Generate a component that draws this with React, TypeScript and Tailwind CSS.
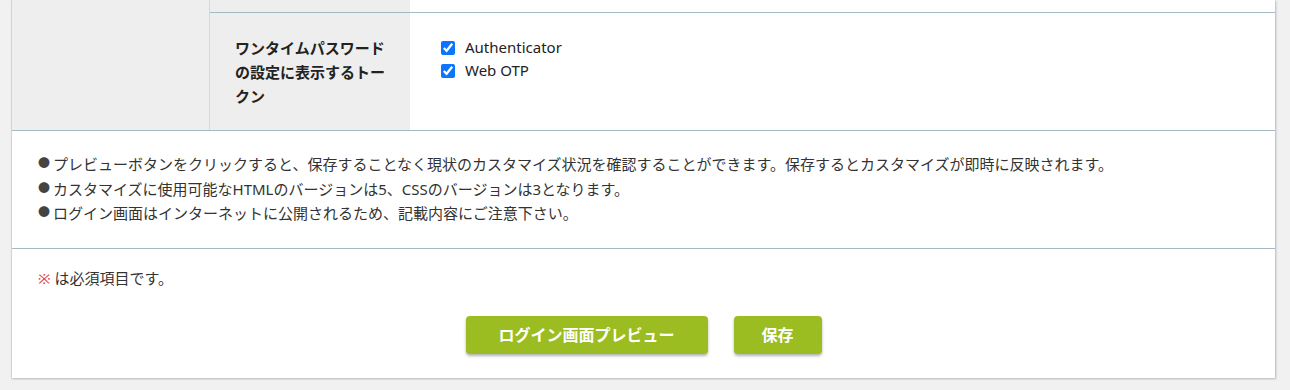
const jp = "font-['Noto_Sans','Noto_Sans_CJK_JP',sans-serif]";

function Check({ label }: { label: string }) {
  return (
    <label className="flex h-[23px] items-center gap-[10px] text-[15px] text-[#222]">
      <input type="checkbox" defaultChecked className="h-[14px] w-[14px] accent-[#0a75ff]" />
      <span>{label}</span>
    </label>
  );
}

export default function App() {
  const notes = [
    "プレビューボタンをクリックすると、保存することなく現状のカスタマイズ状況を確認することができます。保存するとカスタマイズが即時に反映されます。",
    "カスタマイズに使用可能なHTMLのバージョンは5、CSSのバージョンは3となります。",
    "ログイン画面はインターネットに公開されるため、記載内容にご注意下さい。",
  ];

  return (
    <div className={`h-[390px] overflow-hidden bg-[#f1f1f1] pl-[11px] ${jp}`}>
      <div className="w-[1264px] border-l border-[#d4d4d4] bg-white shadow-[1px_1px_2px_rgba(0,0,0,0.25)]">
        {/* settings table */}
        <div className="flex border-b border-[#a3b9c5]">
          <div className="w-[198px] shrink-0 border-r border-[#c9dbe3] bg-[#eeeeee]" />
          <div className="flex-1">
            <div className="flex h-[13px] border-b border-[#a3b9c5]">
              <div className="w-[200px] bg-[#eeeeee]" />
              <div className="flex-1" />
            </div>
            <div className="flex h-[117px]">
              <div className="flex w-[200px] items-center bg-[#eeeeee] pl-[25px] pr-[20px] text-[15px] font-bold leading-[24px] text-[#222]">
                ワンタイムパスワードの設定に表示するトークン
              </div>
              <div className="flex-1 pl-[31px] pt-[23px]">
                <Check label="Authenticator" />
                <Check label="Web OTP" />
              </div>
            </div>
          </div>
        </div>

        {/* notes */}
        <div className="border-b border-[#a3b9c5] px-[26px] pb-[22px] pt-[21px] text-[15px] leading-[24.5px] text-[#333]">
          {notes.map((n) => (
            <p key={n} className="flex h-[24.5px] items-center">
              <span className="w-[15px] shrink-0 text-[12px] leading-none text-[#444]">●</span>
              <span>{n}</span>
            </p>
          ))}
        </div>

        {/* actions */}
        <div className="pb-[24px] pt-[19px]">
          <p className="px-[26px] text-[15px] leading-[20px] text-[#333]">
            <span className="text-[#e03a3a]">※</span> は必須項目です。
          </p>
          <div className="mt-[28px] flex justify-center gap-[26px]">
            <button className="h-[38px] w-[242px] rounded-[4px] bg-[#9bbd21] text-[16px] font-bold text-white shadow-[0_2px_3px_rgba(0,0,0,0.3)]">
              ログイン画面プレビュー
            </button>
            <button className="h-[38px] w-[88px] rounded-[4px] bg-[#9bbd21] text-[16px] font-bold text-white shadow-[0_2px_3px_rgba(0,0,0,0.3)]">
              保存
            </button>
          </div>
        </div>
      </div>
    </div>
  );
}
